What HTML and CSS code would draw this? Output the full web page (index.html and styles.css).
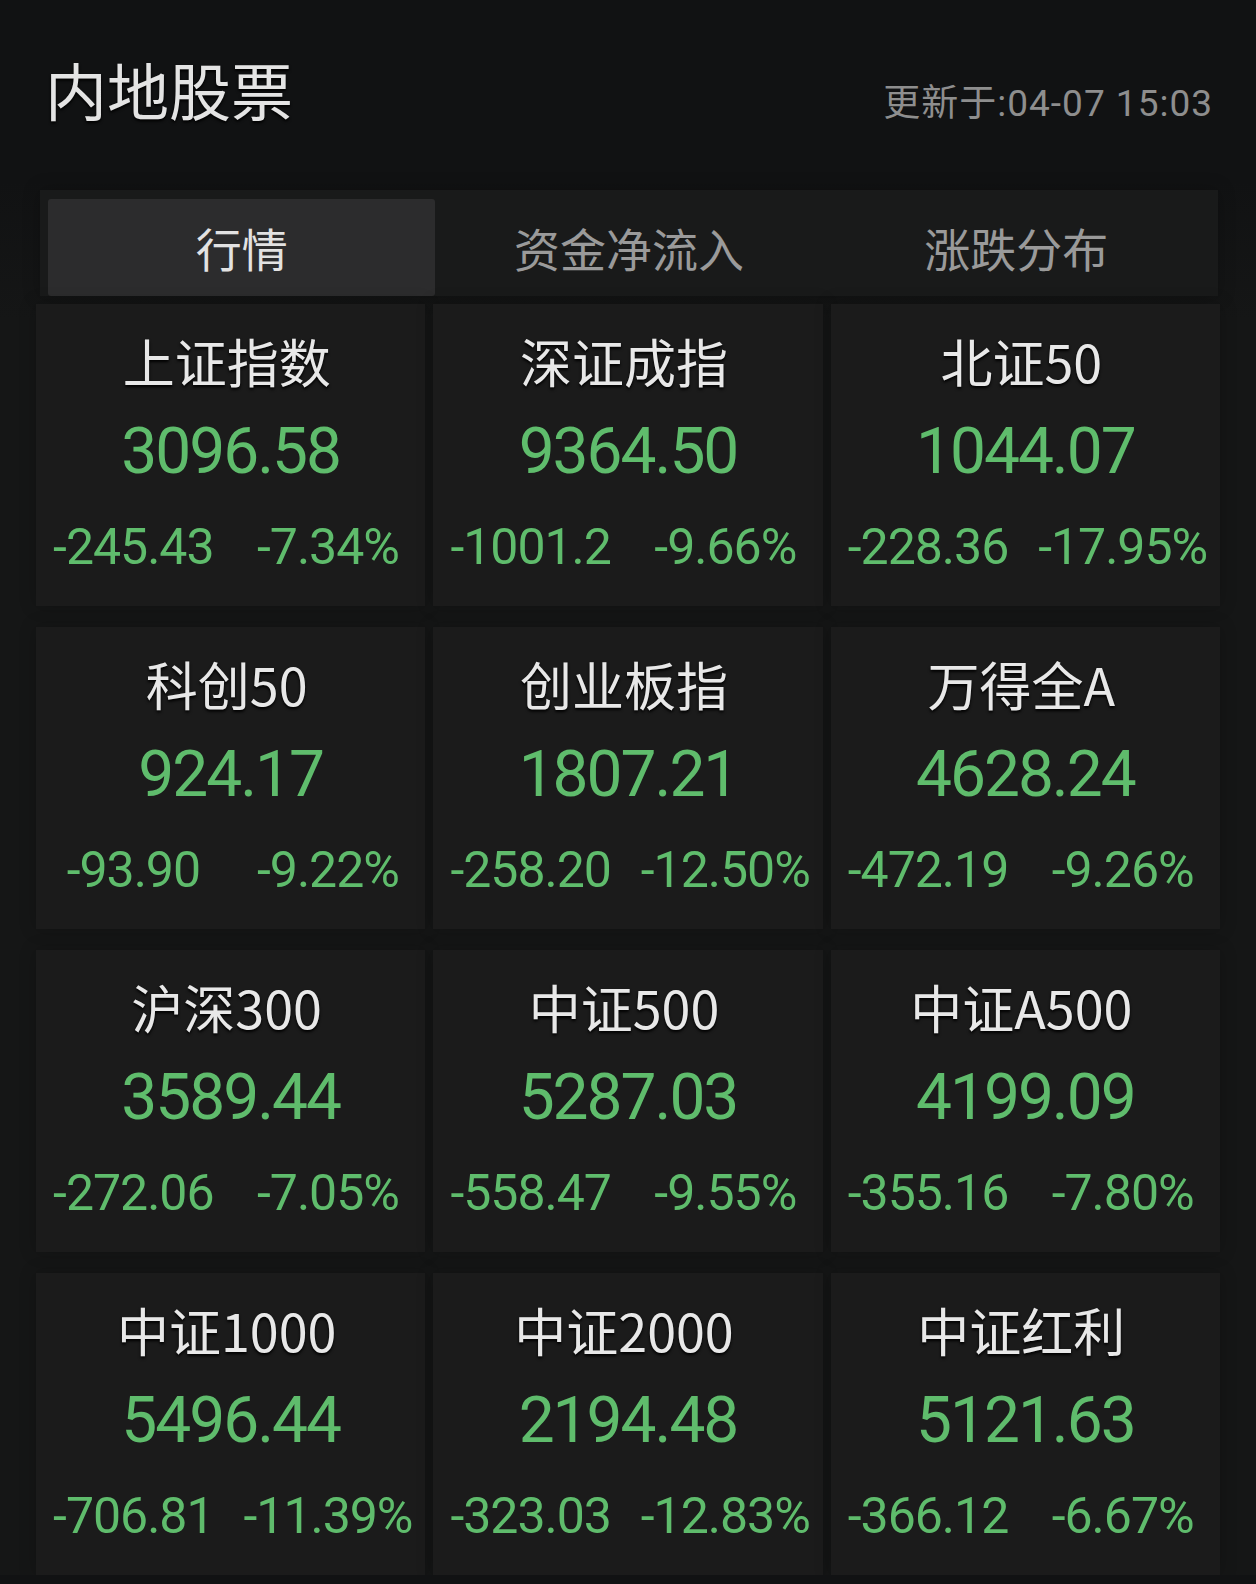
FILE: index.html
```html
<!DOCTYPE html>
<html lang="zh-CN">
<head>
  <meta charset="UTF-8">
  <title>内地股票</title>
  <link rel="stylesheet" href="styles.css">
</head>
<body>
  <div class="header">
    <h1 class="title">内地股票</h1>
    <span class="updated">更新于:04-07 15:03</span>
  </div>

  <div class="tabs">
    <div class="tab active">行情</div>
    <div class="tab">资金净流入</div>
    <div class="tab">涨跌分布</div>
  </div>

  <div class="grid">
    <div class="card">
      <div class="name">上证指数</div>
      <div class="price">3096.58</div>
      <div class="change"><span>-245.43</span><span>-7.34%</span></div>
    </div>
    <div class="card">
      <div class="name">深证成指</div>
      <div class="price">9364.50</div>
      <div class="change"><span>-1001.2</span><span>-9.66%</span></div>
    </div>
    <div class="card">
      <div class="name">北证50</div>
      <div class="price">1044.07</div>
      <div class="change"><span>-228.36</span><span>-17.95%</span></div>
    </div>

    <div class="card">
      <div class="name">科创50</div>
      <div class="price">924.17</div>
      <div class="change"><span>-93.90</span><span>-9.22%</span></div>
    </div>
    <div class="card">
      <div class="name">创业板指</div>
      <div class="price">1807.21</div>
      <div class="change"><span>-258.20</span><span>-12.50%</span></div>
    </div>
    <div class="card">
      <div class="name">万得全A</div>
      <div class="price">4628.24</div>
      <div class="change"><span>-472.19</span><span>-9.26%</span></div>
    </div>

    <div class="card">
      <div class="name">沪深300</div>
      <div class="price">3589.44</div>
      <div class="change"><span>-272.06</span><span>-7.05%</span></div>
    </div>
    <div class="card">
      <div class="name">中证500</div>
      <div class="price">5287.03</div>
      <div class="change"><span>-558.47</span><span>-9.55%</span></div>
    </div>
    <div class="card">
      <div class="name">中证A500</div>
      <div class="price">4199.09</div>
      <div class="change"><span>-355.16</span><span>-7.80%</span></div>
    </div>

    <div class="card">
      <div class="name">中证1000</div>
      <div class="price">5496.44</div>
      <div class="change"><span>-706.81</span><span>-11.39%</span></div>
    </div>
    <div class="card">
      <div class="name">中证2000</div>
      <div class="price">2194.48</div>
      <div class="change"><span>-323.03</span><span>-12.83%</span></div>
    </div>
    <div class="card">
      <div class="name">中证红利</div>
      <div class="price">5121.63</div>
      <div class="change"><span>-366.12</span><span>-6.67%</span></div>
    </div>
  </div>
</body>
</html>
```

FILE: styles.css
```css
body {
  margin: 0;
  background: linear-gradient(#111213 0, #111213 180px, #151616 320px) #151616;
  color: #e6e6e6;
  font-family: "Noto Sans CJK SC", "Noto Sans", sans-serif;
  overflow: hidden;
}
.header {
  display: flex;
  justify-content: space-between;
  align-items: baseline;
  height: 190px;
  padding: 0 43px 0 45px;
  box-sizing: border-box;
}
h1.title {
  margin: 0;
  padding-top: 58px;
  font-size: 62px;
  line-height: 62px;
  font-weight: 400;
  color: #e4e4e4;
  text-shadow: 0 2px 3px #000;
}
.updated {
  font-family: Roboto, "Noto Sans CJK SC", sans-serif;
  font-size: 37px;
  letter-spacing: 1px;
  color: #8e8e8e;
}
.tabs {
  display: grid;
  grid-template-columns: repeat(3, 1fr);
  margin: 0 38px 0 40px;
  padding: 9px 8px 0;
  background: #191a1a;
  box-shadow: 0 0 16px rgba(0, 0, 0, 0.25);
}
.tab {
  height: 97px;
  line-height: 97px;
  text-align: center;
  font-size: 46px;
  color: #9a9a9a;
}
.tab.active {
  background: #2c2c2d;
  color: #e2e2e2;
  border-radius: 3px;
}
.grid {
  display: grid;
  grid-template-columns: repeat(3, 1fr);
  column-gap: 8px;
  row-gap: 21px;
  margin: 8px 36px 0 36px;
}
.card {
  height: 302px;
  padding-top: 27px;
  box-sizing: border-box;
  background: #1b1b1b;
  box-shadow: 0 0 16px rgba(0, 0, 0, 0.22);
  text-align: center;
}
.name {
  height: 60px;
  line-height: 60px;
  font-size: 52px;
  color: #e8e8e8;
  text-shadow: 0 2px 3px #000;
  padding-right: 8px;
}
.price {
  margin-top: 23px;
  height: 76px;
  line-height: 76px;
  font-family: Roboto, sans-serif;
  font-size: 64px;
  letter-spacing: -2px;
  color: #5fbc6c;
}
.change {
  display: grid;
  grid-template-columns: 1fr 1fr;
  margin-top: 27px;
  height: 60px;
  line-height: 60px;
  font-family: Roboto, sans-serif;
  font-size: 50px;
  letter-spacing: -1px;
  color: #5fbc6c;
}
```
